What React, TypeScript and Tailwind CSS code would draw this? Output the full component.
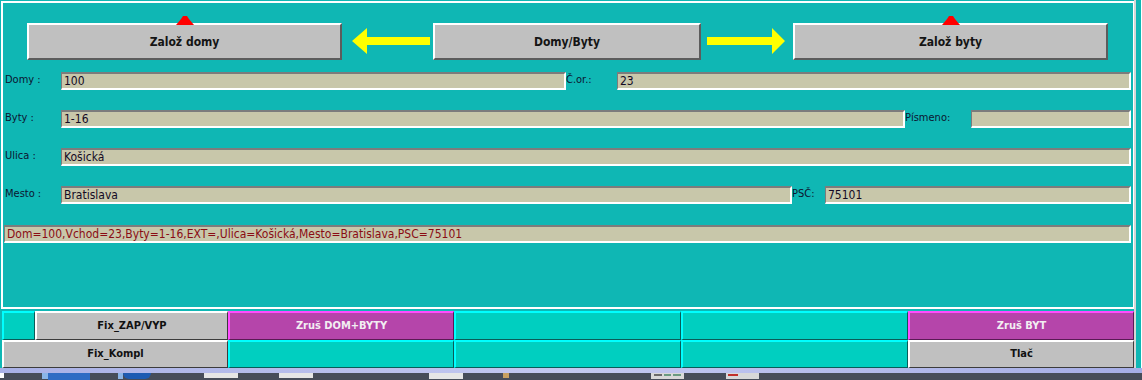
import React from "react";

const font = "font-['DejaVu_Sans_Condensed','DejaVu_Sans',sans-serif]";

function RedMark() {
  return (
    <svg width="18" height="10" viewBox="0 0 18 10" className="absolute -top-[10px] left-1/2 -translate-x-1/2">
      <polygon points="0,10 5,4 7,1 11,1 13,4 18,10" fill="#ff0000" />
    </svg>
  );
}

function TopButton({ label, w, mark }: { label: string; w: string; mark?: boolean }) {
  return (
    <div
      className={`${w} relative h-[37px] bg-[#c0c0c0] border-t-2 border-l-2 border-white border-b-2 border-r-2 border-b-[#5c5c5c] border-r-[#5c5c5c] flex items-center justify-center text-[12px] font-bold text-[#141414]`}
    >
      {mark && <RedMark />}
      {label}
    </div>
  );
}

function Field({ w, value, red }: { w: string; value?: string; red?: boolean }) {
  return (
    <div
      className={`${w} h-[18px] bg-[#c8c7aa] border-t-2 border-l border-[#7c7c7c] border-b-2 border-r-2 border-b-white border-r-white pl-[2px] text-[12px] leading-[15px] whitespace-nowrap overflow-hidden ${
        red ? "text-[#8a0c14]" : "text-[#140a24]"
      }`}
    >
      {value}
    </div>
  );
}

function Label({ w, text }: { w: string; text: string }) {
  return <div className={`${w} h-[18px] text-[11px] leading-[15px] text-[#0c1430] whitespace-nowrap`}>{text}</div>;
}

type Cell = { w: string; kind: "teal" | "gray" | "pink"; text?: string };

const cellStyle = {
  teal: "bg-[#00cfc0] border-t-2 border-l-2 border-[#00ffff] border-b border-r border-b-[#0a5c58] border-r-[#0a5c58]",
  gray: "bg-[#c0c0c0] border-t-2 border-l-2 border-white border-b border-r border-b-[#3c3c3c] border-r-[#3c3c3c] text-[#111]",
  pink: "bg-[#b545aa] border-t-2 border-l-2 border-[#ff4dff] border-b border-r border-b-[#5a1a55] border-r-[#5a1a55] text-[#f2eef2]",
};

function BottomRow({ cells, h }: { cells: Cell[]; h: string }) {
  return (
    <div className={`flex pl-[2px] ${h}`}>
      {cells.map((c, i) => (
        <div key={i} className={`${c.w} h-full flex items-center justify-center text-[11px] font-bold ${cellStyle[c.kind]}`}>
          {c.text}
        </div>
      ))}
    </div>
  );
}

export default function App() {
  return (
    <div className={`w-[1142px] h-[380px] overflow-hidden bg-[#0fb7b4] flex flex-col ${font}`}>
      <div className="flex h-[368px]">
        <div className="w-[1134px] flex flex-col">
          {/* main panel */}
          <div className="h-[311px] pt-[1px] pl-[1px]">
            <div className="w-[1133px] h-[308px] border-t-2 border-l-2 border-r border-b-2 border-white pt-[20px] flex flex-col">
              <div className="flex items-center pl-[24px]">
                <TopButton label="Založ domy" w="w-[315px]" mark />
                <svg width="91" height="37" viewBox="0 0 91 37">
                  <polygon points="10,18 25,5 25,14 88,14 88,22 25,22 25,31" fill="#ffff00" />
                </svg>
                <TopButton label="Domy/Byty" w="w-[268px]" />
                <svg width="92" height="37" viewBox="0 0 92 37">
                  <polygon points="6,14 71,14 71,5 84,18 71,31 71,22 6,22" fill="#ffff00" />
                </svg>
                <TopButton label="Založ byty" w="w-[315px]" mark />
              </div>

              <div className="flex mt-[12px] pl-[2px]">
                <Label w="w-[56px]" text="Domy  :" />
                <Field w="w-[505px]" value="100" />
                <Label w="w-[51px]" text="Č.or.:" />
                <Field w="w-[514px]" value="23" />
              </div>
              <div className="flex mt-[20px] pl-[2px]">
                <Label w="w-[56px]" text="Byty  :" />
                <Field w="w-[844px]" value="1-16" />
                <Label w="w-[66px]" text="Písmeno:" />
                <Field w="w-[160px]" />
              </div>
              <div className="flex mt-[20px] pl-[2px]">
                <Label w="w-[56px]" text="Ulica :" />
                <Field w="w-[1070px]" value="Košická" />
              </div>
              <div className="flex mt-[20px] pl-[2px]">
                <Label w="w-[56px]" text="Mesto :" />
                <Field w="w-[731px]" value="Bratislava" />
                <Label w="w-[33px]" text="PSČ:" />
                <Field w="w-[306px]" value="75101" />
              </div>
              <div className="flex mt-[21px] pl-[1px]">
                <Field
                  w="w-[1127px]"
                  red
                  value="Dom=100,Vchod=23,Byty=1-16,EXT=,Ulica=Košická,Mesto=Bratislava,PSC=75101"
                />
              </div>
            </div>
          </div>

          {/* bottom buttons */}
          <BottomRow
            h="h-[29px]"
            cells={[
              { w: "w-[33px]", kind: "teal" },
              { w: "w-[193px]", kind: "gray", text: "Fix_ZAP/VYP" },
              { w: "w-[226px]", kind: "pink", text: "Zruš DOM+BYTY" },
              { w: "w-[227px]", kind: "teal" },
              { w: "w-[227px]", kind: "teal" },
              { w: "w-[226px]", kind: "pink", text: "Zruš BYT" },
            ]}
          />
          <BottomRow
            h="h-[28px]"
            cells={[
              { w: "w-[226px]", kind: "gray", text: "Fix_Kompl" },
              { w: "w-[226px]", kind: "teal" },
              { w: "w-[227px]", kind: "teal" },
              { w: "w-[227px]", kind: "teal" },
              { w: "w-[226px]", kind: "gray", text: "Tlač" },
            ]}
          />
        </div>
        {/* neighbouring window edge */}
        <div className="w-[8px] border-l-2 border-l-[#d6d6d6] border-r border-r-white" />
      </div>

      {/* taskbar */}
      <div className="h-[12px] flex flex-col">
        <div className="h-[5px] bg-gradient-to-r from-[#a9b1e6] via-[#c4c9f0] to-[#a6aee6]" />
        <div className="flex-1 bg-[#474d59] flex items-start">
          <div className="w-[4px] h-[5px] bg-white" />
          <div className="ml-[38px] w-[6px] h-[6px] bg-[#8ab4e6]" />
          <div className="w-[42px] h-[7px] bg-[#2f6cc4]" />
          <div className="ml-[28px] w-[5px] h-[6px] bg-[#8ab4e6]" />
          <div className="w-[28px] h-[6px] rounded-b-full bg-[#1d5bb2]" />
          <div className="ml-[53px] w-[34px] h-[5px] bg-[#e6e6e6]" />
          <div className="ml-[41px] w-[34px] h-[5px] bg-[#e6e6e6]" />
          <div className="ml-[116px] w-[34px] h-[6px] bg-[#e6e6e6]" />
          <div className="ml-[40px] w-[6px] h-[5px] bg-[#c8a060]" />
          <div className="ml-[142px] w-[33px] h-[6px] bg-[#d8d8d8] flex gap-[2px] px-[3px] pt-[1px]">
            <div className="w-[8px] h-[2px] bg-[#6a6a6a]" />
            <div className="w-[8px] h-[2px] bg-[#6a9a80]" />
            <div className="w-[8px] h-[2px] bg-[#6a9a80]" />
          </div>
          <div className="ml-[42px] w-[33px] h-[6px] bg-[#d8d8d8] pl-[2px] pt-[1px]">
            <div className="w-[10px] h-[2px] bg-[#c0302a]" />
          </div>
        </div>
      </div>
    </div>
  );
}
